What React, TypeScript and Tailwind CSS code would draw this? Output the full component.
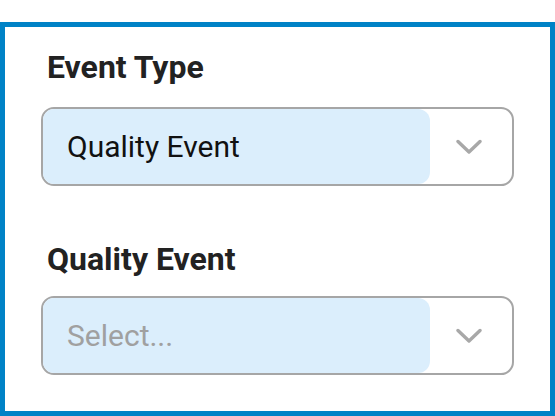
import React from "react";

function Chevron() {
  return (
    <svg width="26" height="16" viewBox="0 0 26 16" fill="none">
      <path d="M2 2.5 L13 13 L24 2.5" stroke="#a8a8a8" strokeWidth="3.4" strokeLinecap="round" strokeLinejoin="round" />
    </svg>
  );
}

interface SelectProps {
  value?: string;
  placeholder?: string;
}

function SelectBox({ value, placeholder }: SelectProps) {
  return (
    <div className="h-[79px] flex border-2 border-[#a6a6a6] rounded-[13px] bg-white overflow-hidden">
      <div className="w-[387px] h-full bg-[#dbeefc] rounded-r-[12px] flex items-center pl-[24px]">
        {value ? (
          <span className="text-[30px] text-[#111111]">{value}</span>
        ) : (
          <span className="text-[30px] text-[#a0a0a0]">{placeholder}</span>
        )}
      </div>
      <div className="flex-1 flex items-center justify-center pr-[4px]">
        <Chevron />
      </div>
    </div>
  );
}

export default function App() {
  return (
    <div className="w-[555px] h-[416px] bg-white pt-[22px] font-['Roboto',sans-serif]">
      <div className="h-[394px] border-[5px] border-[#0082c6] px-[36px] pt-[21px]">
        <h2 className="ml-[6px] text-[32px] leading-[38px] font-bold text-[#222222]">Event Type</h2>
        <div className="mt-[21px]">
          <SelectBox value="Quality Event" />
        </div>
        <h2 className="ml-[6px] mt-[54px] text-[32px] leading-[38px] font-bold text-[#222222]">Quality Event</h2>
        <div className="mt-[18px]">
          <SelectBox placeholder="Select..." />
        </div>
      </div>
    </div>
  );
}
